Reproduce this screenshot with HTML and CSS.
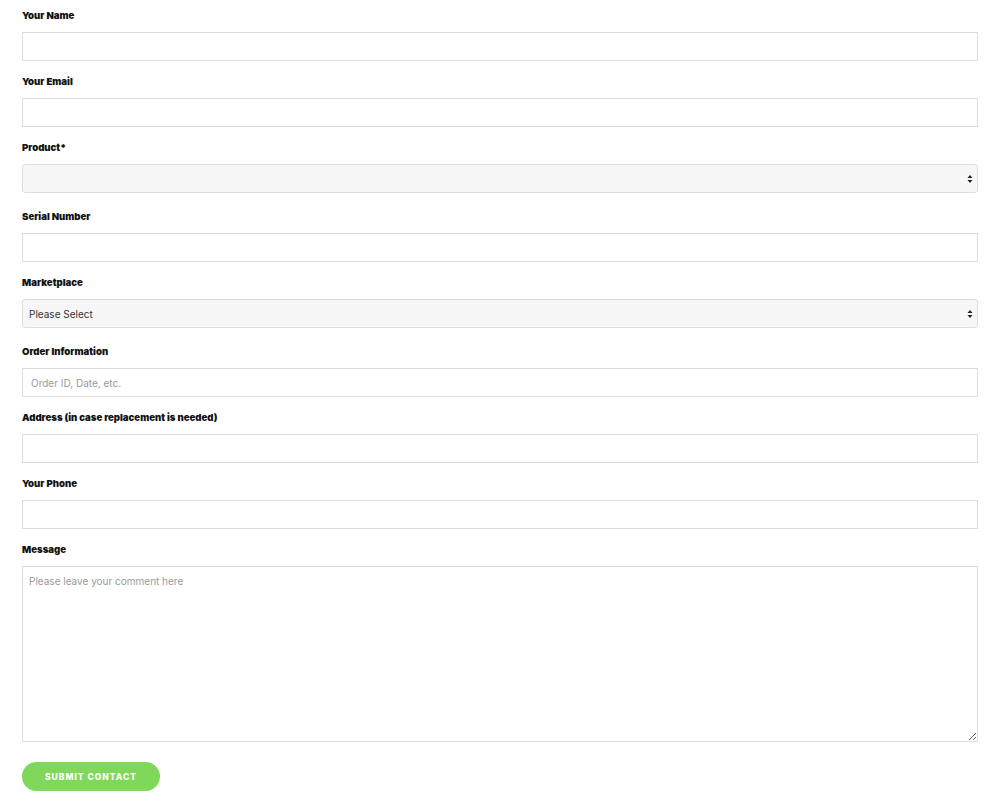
FILE: index.html
```html
<!DOCTYPE html>
<html lang="en">
<head>
<meta charset="utf-8">
<title>Contact</title>
<link rel="stylesheet" href="styles.css">
</head>
<body>
<form class="form">
  <div class="field">
    <label class="label">Your Name</label>
    <input class="input" type="text">
  </div>
  <div class="field">
    <label class="label">Your Email</label>
    <input class="input" type="email">
  </div>
  <div class="field field-select">
    <label class="label">Product*</label>
    <div class="select-wrap">
      <select class="input select"><option></option></select>
      <svg class="arrows" width="6" height="10" viewBox="0 0 6 10"><path d="M3 1 L5.5 4 H0.5 Z M3 9 L0.5 6 H5.5 Z" fill="#222"/></svg>
    </div>
  </div>
  <div class="field">
    <label class="label">Serial Number</label>
    <input class="input" type="text">
  </div>
  <div class="field field-select">
    <label class="label">Marketplace</label>
    <div class="select-wrap">
      <select class="input select"><option>Please Select</option></select>
      <svg class="arrows" width="6" height="10" viewBox="0 0 6 10"><path d="M3 1 L5.5 4 H0.5 Z M3 9 L0.5 6 H5.5 Z" fill="#222"/></svg>
    </div>
  </div>
  <div class="field">
    <label class="label">Order Information</label>
    <input class="input" type="text" placeholder="Order ID, Date, etc.">
  </div>
  <div class="field">
    <label class="label">Address (in case replacement is needed)</label>
    <input class="input" type="text">
  </div>
  <div class="field">
    <label class="label">Your Phone</label>
    <input class="input" type="tel">
  </div>
  <div class="field field-last">
    <label class="label">Message</label>
    <textarea class="input textarea" placeholder="Please leave your comment here"></textarea>
  </div>
  <div class="actions">
    <button class="submit" type="button">SUBMIT CONTACT</button>
  </div>
</form>
</body>
</html>
```
FILE: styles.css
```css
html, body {
  margin: 0;
  padding: 0;
  background: #ffffff;
}
body {
  font-family: "Inter", "Liberation Sans", sans-serif;
  color: #111;
}
.form {
  display: flex;
  flex-direction: column;
  gap: 13px;
  padding: 8px 22px 0 22px;
}
.field {
  display: flex;
  flex-direction: column;
}
.field-select {
  margin-bottom: 3px;
}
.field-last {
  margin-bottom: 7px;
}
.label {
  display: block;
  font-size: 9.6px;
  font-weight: 900;
  line-height: 15px;
  height: 15px;
  margin-bottom: 9px;
  color: #111;
}
.input {
  box-sizing: border-box;
  width: 100%;
  height: 29px;
  margin: 0;
  border: 1px solid #dddddd;
  border-radius: 0;
  background: #ffffff;
  padding: 0 8px;
  font-family: "Inter", "Liberation Sans", sans-serif;
  font-size: 10px;
  color: #333;
  outline: none;
}
.input::placeholder {
  color: #9a9a9a;
}
.select-wrap {
  position: relative;
}
.select {
  -webkit-appearance: none;
  appearance: none;
  background: #f7f7f7;
  border-radius: 3px;
  padding: 0 6px;
  color: #333;
}
.arrows {
  position: absolute;
  right: 5px;
  top: 10px;
  pointer-events: none;
}
.textarea {
  height: 176px;
  padding: 8px 6px;
  resize: vertical;
  display: block;
}
.actions {
  display: flex;
}
.submit {
  width: 138px;
  height: 29px;
  border: none;
  border-radius: 15px;
  background: #7fd85a;
  color: #ffffff;
  font-family: "Inter", "Liberation Sans", sans-serif;
  font-size: 8.5px;
  font-weight: 800;
  letter-spacing: 1px;
  padding: 0;
  cursor: pointer;
}
```
